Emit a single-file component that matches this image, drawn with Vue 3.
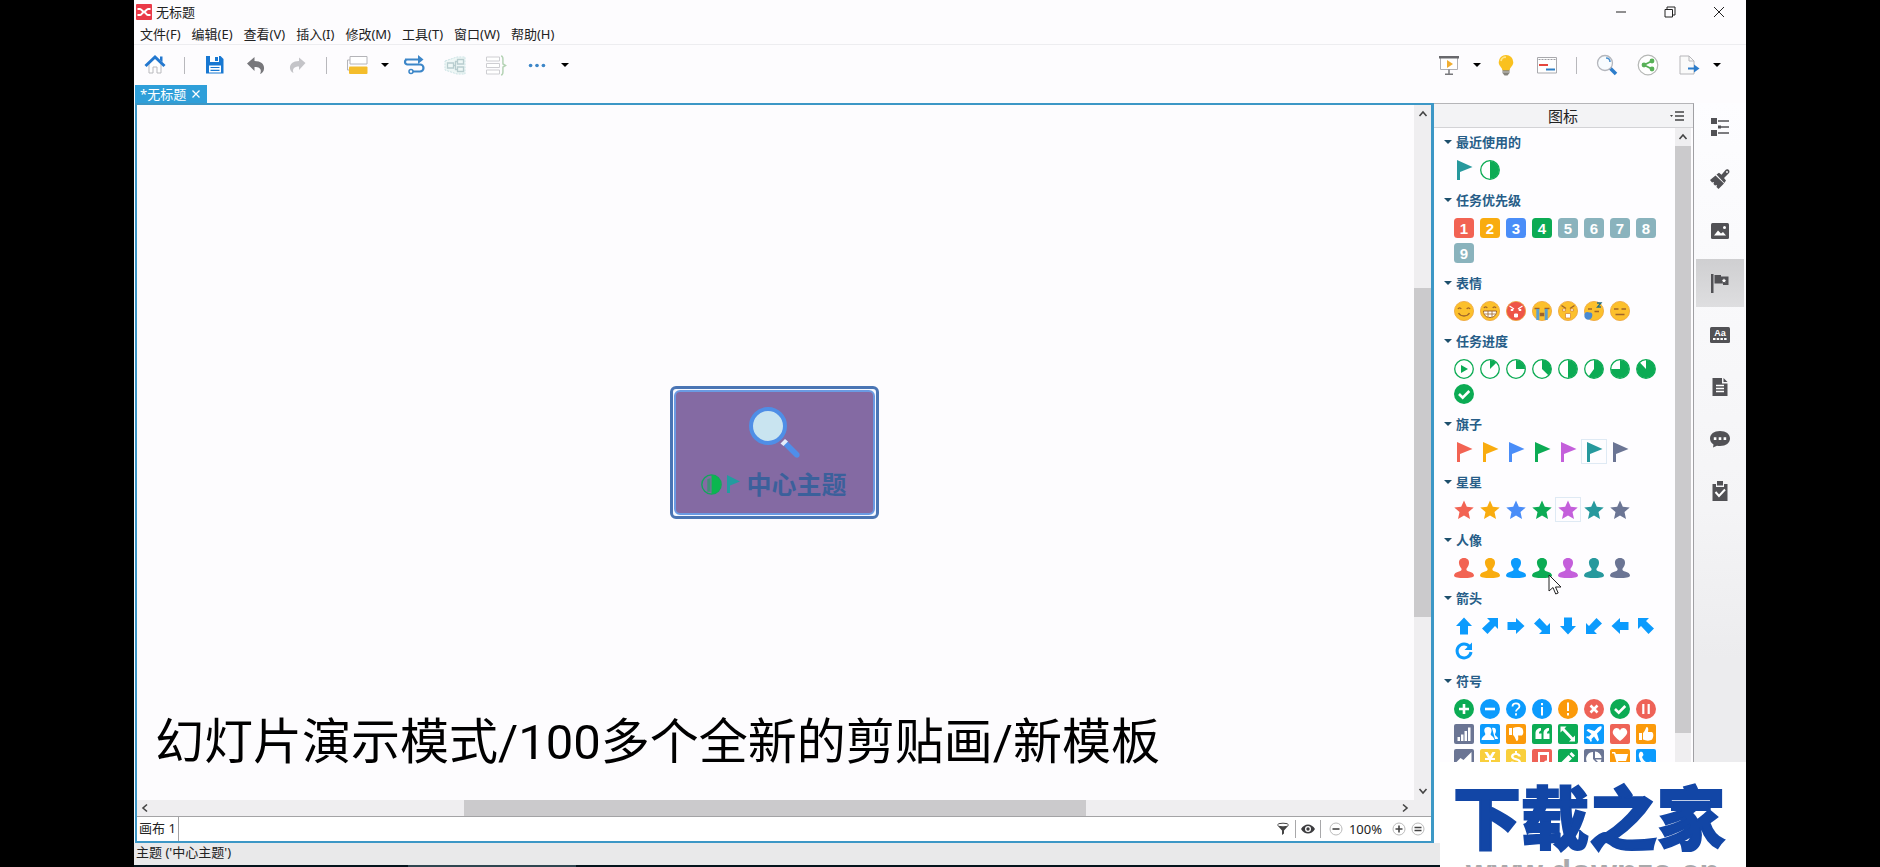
<script setup>
const menus = ['文件(F)', '编辑(E)', '查看(V)', '插入(I)', '修改(M)', '工具(T)', '窗口(W)', '帮助(H)']

const bar = {
  home: '<path d="M5 10v9h4v-6h4v6h4v-9l-6-6z" fill="#fff" stroke="#b9b9bd"/><path d="M1.500 12 11 3l9.500 9" fill="none" stroke="#2378cf" stroke-width="3"/><path d="M16 2.500h2.500V8L16 6z" fill="#2378cf"/>',
  save: '<path d="M2 2h14.500L19.500 5v14.500H2z" fill="#1878d2"/><path d="M6 2h9v6H6z" fill="#fff"/><path d="M11 3h3v4h-3z" fill="#1878d2"/><path d="M5 11.500h12v7H5z" fill="#fff"/><path d="M6.500 13.500h9M6.500 16.300h9" stroke="#1878d2" stroke-width="1.200"/>',
  undo: '<path d="M2 9.500 9.500 3v4c7 0 10 3.500 9.500 8-.3 2.500-1.500 4-4 5 2-4 .5-7-5.500-7v4z" fill="#77777b"/>',
  redo: '<path d="M19.500 9 13 3.500V7C7 7 3.500 10 4 14.500c.3 2 1.500 3.500 3.500 4.500-1.500-4 .5-6.500 5.500-6.500V16z" fill="#c4c4c8"/>',
  topic: '<path d="M4 2.500h17v7.500H4z" fill="#fff" stroke="#b4b4b8"/><path d="M4 6H1.500v10H4" fill="none" stroke="#b4b4b8"/><rect x="3" y="12.500" width="18.500" height="7.500" rx="1" fill="#f4bd2c"/>',
  relation: '<path d="M2 5.500h15M7 10.500H4.500a2.500 2.500 0 0 1 0-5M7 10.500h10a3.500 3.500 0 0 1 0 7H8" fill="none" stroke="#3c86c8" stroke-width="2.200"/><path d="m15 1 5.500 4.500L15 10z" fill="#3c86c8"/><circle cx="8" cy="17.500" r="2" fill="#fff" stroke="#3c86c8" stroke-width="1.500"/>',
  boundary: '<path d="M1 7 13 3h8v17h-8L1 16z" fill="#eef7f6" stroke="#cbe2e4" stroke-dasharray="2 1"/><path d="M3.500 9h6v5h-6zM13.500 5.500h6v4.500h-6zM13.500 13h6v4.500h-6zM9.500 11.500h2M13.500 7.500h-2v8h2" fill="none" stroke="#b8cdcf" stroke-width="1.300"/>',
  summary: '<path d="M1.500 3h13v4h-13zM1.500 9.500h13v4h-13zM1.500 16h13v4h-13z" fill="#fff" stroke="#ceced2"/><path d="M16 2c3 0 1.500 6 2 8l2.500 1.500L18 13c-.5 2 1 8-2 8" fill="none" stroke="#b5d3b5" stroke-width="1.500"/>',
  dots: '<circle cx="5" cy="11.500" r="2" fill="#3c86c8"/><circle cx="12" cy="11.500" r="2" fill="#3c86c8"/><circle cx="19" cy="11.500" r="2" fill="#3c86c8"/>',
  present: '<path d="M2.500 4v11.500h17V4" fill="#fff" stroke="#b0b0b4"/><path d="M1 2h20v2.500H1z" fill="#68686c"/><path d="M11 15.500V20M7 20.300h8" stroke="#77777b" stroke-width="1.500"/><path d="m9 6 6 4-6 4z" fill="#f0ad30"/>',
  bulb: '<path d="M7.500 15h7v4l-2 2.500h-3l-2-2.500z" fill="#85837c"/><path d="M11 1a7.200 7.200 0 0 0-7.300 7.200c0 3.300 3 4.800 3.800 8h7c.8-3.200 3.800-4.700 3.800-8A7.200 7.200 0 0 0 11 1z" fill="#fac11f"/><path d="M6 7c.5-3 3-4 5-3.700" fill="none" stroke="#ffe588" stroke-width="1.800"/><path d="M7.500 18h7" stroke="#c9c7c0"/>',
  gantt: '<path d="M1.500 3.500h19v15.500h-19z" fill="#fff" stroke="#a9a9ad"/><path d="M2.500 5.500h17" stroke="#9d9da3" stroke-dasharray="2 1"/><path d="M3 11h9" stroke="#e5473f" stroke-width="2"/><path d="M10 15.500h9" stroke="#2f7fc4" stroke-width="2"/>',
  search: '<path d="m14 14 6 6" stroke="#2d7dcb" stroke-width="3.500"/><circle cx="9" cy="9" r="7.500" fill="#f8fcff" stroke="#b4b6bc" stroke-width="1.300"/><path d="M10 4c2.500 0 4 1.700 4 4" fill="none" stroke="#4c91cf" stroke-width="1.600"/>',
  share: '<circle cx="11" cy="11" r="9.800" fill="#fff" stroke="#b5b7b5" stroke-width="1.200"/><path d="M15 7 7 11l8 4" fill="none" stroke="#58b158" stroke-width="1.800"/><circle cx="15" cy="7" r="2.400" fill="#58b158"/><circle cx="7" cy="11" r="2.400" fill="#58b158"/><circle cx="15" cy="15" r="2.400" fill="#58b158"/>',
  exp: '<path d="M2 2h9l5 5v13H2z" fill="#fafafa" stroke="#b6b6ba"/><path d="M11 2v5h5" fill="none" stroke="#b6b6ba"/><path d="M10 14.500h8" stroke="#2d7dcb" stroke-width="2"/><path d="m16 10.500 5.500 4-5.500 4z" fill="#2d7dcb"/>',
}

const leftTools = [
  ['home', '主页'], ['sep'], ['save', '保存'], ['undo', '撤销'], ['redo', '重做'], ['sep'],
  ['topic', '主题'], ['caret', '更多主题'], ['relation', '联系'], ['boundary', '外框'],
  ['summary', '概要'], ['dots', '更多'], ['caret', '更多选项'],
]
const rightTools = [
  ['present', '演示'], ['caret', '演示选项'], ['bulb', '头脑风暴'], ['gantt', '甘特图'], ['sep'],
  ['search', '搜索'], ['share', '分享'], ['exp', '导出'], ['caret', '导出选项'],
]

const views = [
  ['大纲', '<path d="M1 1h6v6H1zM1 13h6v6H1zM8 8.500h3v3H8z"/><path d="M8 4h11M11 10h8M8 16h11" stroke="#515155" stroke-width="1.600"/>'],
  ['格式', '<path d="M0 11 5.500 6.500l8.500 8-5.500 5.500-2-2 .5-2-2 .5-1.500-1.500.5-2-2 .5z"/><path d="m6.500 5.500 2.500-1.700 2.500 2L15.500 1c1-1.200 3-.8 3.700.5.500 1.200.2 2.300-.7 3L14 9l2 2.500-1.700 2.500z"/><circle cx="17" cy="3" r=".9" fill="#fff"/>'],
  ['图片', '<rect x="1" y="2" width="18" height="16" rx="1.500"/><path d="m4 14.500 4-5 3 3 2-1.500 3 3.500z" fill="#fff"/><circle cx="14.500" cy="6.500" r="1.500" fill="#fff"/>'],
  ['图标', '<path d="M1 1h2.500v19H1zM4.500 2H11v1.500h7.500V12H13v-1.500H4.500z"/><path d="m14 5.300.7 1.400 1.600.2-1.200 1.100.3 1.600-1.400-.8-1.400.8.3-1.600-1.200-1.100 1.600-.2z" fill="#fff"/>'],
  ['标签', '<rect x="0" y="2" width="20" height="16" rx="1.500"/><path d="M3 14h14" stroke="#fff" stroke-width="2.200" stroke-dasharray="2.500 1.200"/><text x="10" y="10.500" text-anchor="middle" font-size="9" font-weight="700" font-family="Liberation Sans" fill="#fff">Aa</text>'],
  ['备注', '<path d="M2.500 1h9.500v5.500h5.500V19h-15z"/><path d="m13.500 1 4 4h-4z"/><path d="M6 8.500h8M6 11.500h8M6 14.500h8" stroke="#fff" stroke-width="1.300"/>'],
  ['批注', '<path d="M10 2c6 0 10 3 10 7.500S16 17 10 17c-1 0-2-.1-3-.3L3 18.500l.5-3C1.300 14 0 12 0 9.500 0 5 4 2 10 2z"/><path d="M3.800 8.300h2.600v2.600H3.800zM8.700 8.300h2.600v2.600H8.700zM13.600 8.300h2.600v2.600h-2.600z" fill="#fff"/>'],
  ['任务信息', '<path d="M2.500 3H6v3h8V3h3.500v17h-15z"/><path d="M7 0h6v4.500H7z"/><path d="m5.500 11 3.500 4 6-6.500" stroke="#fff" stroke-width="2" fill="none"/>'],
]

const palette = ['#f26353', '#f9ac0f', '#4a8df8', '#0cab54', '#c45fdb', '#27999d', '#6b7594']
const green = '#0cab54'

const flag = (c) => `<path d="M3 0l15.500 7L6 12v8H3z" fill="${c}"/>`
const star = (c) => `<path d="m10 .500 2.800 6.300 6.900.700-5.200 4.600 1.500 6.900-6-3.500L4 19l1.500-6.900L.3 7.500l6.900-.7z" fill="${c}"/>`
const person = (c) => `<path d="M10 0c3.600 0 5.300 2.300 5 5.300-.2 2.400-1.500 4-2.300 5-.8 1.700 0 2.700 2.300 3.200 3 .7 5 2 5 4.200C20 19.500 15 20 10 20S0 19.500 0 17.700c0-2.200 2-3.500 5-4.200 2.300-.5 3.100-1.500 2.300-3.200-.8-1-2.100-2.600-2.300-5C4.700 2.300 6.400 0 10 0z" fill="${c}"/>`
const digit = (n) => `<rect width="20" height="20" rx="3.500" fill="${['#f26353', '#f9ac0f', '#4a8df8', '#0cab54'][n - 1] || '#8ab3bd'}"/><text x="10" y="15.500" text-anchor="middle" font-size="15" font-weight="700" font-family="Liberation Sans" fill="#fff">${n}</text>`
const pie = (f) => {
  const a = f * 2 * Math.PI
  const x = 10 + 9 * Math.sin(a)
  const y = 10 - 9 * Math.cos(a)
  return `<circle cx="10" cy="10" r="9.300" fill="#fff" stroke="${green}" stroke-width="1.300"/><path d="M10 10V1A9 9 0 ${f > 0.5 ? 1 : 0} 1 ${x} ${y}z" fill="${green}"/>`
}
const arrow = (deg) => deg % 90
  ? `<path transform="rotate(${deg - 45} 10 10)" d="M18 2v11l-3-3-7.500 8L2 12.500 10 5 7 2z" fill="#0c9bfd"/>`
  : `<path transform="rotate(${deg} 10 10)" d="m10 1.500 8 8.500h-4v8.500H6V10H2z" fill="#0c9bfd"/>`
const face = (inner, c = '#fcc02c') => `<circle cx="10" cy="10" r="9.600" fill="${c}" stroke="#eda43a" stroke-width=".8"/><g fill="none" stroke="#a0652a" stroke-width="1.400">${inner}</g>`
const disc = (c, inner) => `<circle cx="10" cy="10" r="10" fill="${c}"/><g fill="none" stroke="#fff" stroke-width="2.600">${inner}</g>`
const tile = (c, inner) => `<rect width="20" height="20" rx="2" fill="${c}"/><g fill="#fff">${inner}</g>`
const check = '<path d="m5 10 3.700 3.700L15.300 7"/>'
const blue = '#0c9bfd'
const red = '#ee6257'
const orange = '#fb9a0b'
const slate = '#6b7594'
const yellow = '#f9cf3c'

const sections = [
  { name: '最近使用的', icons: [flag('#27999d'), pie(0.5)] },
  { name: '任务优先级', icons: [1, 2, 3, 4, 5, 6, 7, 8, 9].map(digit) },
  {
    name: '表情',
    icons: [
      face('<path d="M4 8c.7-1.500 2.500-1.500 3.200 0M12.800 8c.7-1.500 2.500-1.500 3.200 0M4.500 12c2.500 4 8.500 4 11 0"/>'),
      face('<path d="M4 7c.7-1.500 2.500-1.500 3.200 0M12.800 7c.7-1.500 2.500-1.500 3.200 0"/><path d="M3.500 10h13c0 4-2.500 6.500-6.500 6.500S3.500 14 3.500 10z" fill="#fff" stroke-width="1"/><path d="M4.500 13h11M8 10v6M12 10v6" stroke-width=".8"/>'),
      face('<path d="m3.500 5 4.500 3M16.500 5 12 8" stroke="#fff" stroke-width="1.200"/><path d="M5 8.500h2v1H5zM13 8.500h2v1h-2zM8.500 13h3v3h-3z" stroke="#fff" stroke-width="1" fill="#fff"/>', '#ee5547'),
      face('<path d="M2.500 7.500h5M12.500 7.500h5"/><path d="M5.800 8v11M14.200 8v11" stroke="#5b9fd0" stroke-width="3"/><path d="M8.500 12.500h3v2h-3z" fill="#a0652a"/>'),
      face('<path d="m3.500 4.500 4.500 3M16.500 4.500l-4.500 3"/><path d="M4.500 8h3v2h-3zM12.500 8h3v2h-3zM7.500 12.500h5v4.500h-5z" fill="#fff" stroke="#d98a35" stroke-width=".8"/>'),
      face('<path d="M4 8h4M10.500 10.500H15"/><path d="M1 12c2-2 4 0 5-.5 2 0 3 2 2 4.500-1 2.500-4 3.500-6 2-2-1.500-2-4-1-6z" fill="#4a8ad2" stroke="none"/><path d="M13 2h4L13.500 6H17" stroke="#246b7d" stroke-width="1.300"/>'),
      face('<path d="M4 8h4.500M11.500 8H16M5.500 13.500h9"/>'),
    ],
  },
  {
    name: '任务进度',
    icons: [
      `<circle cx="10" cy="10" r="9.300" fill="#fff" stroke="${green}" stroke-width="1.300"/><path d="m7 6 7 4-7 4z" fill="${green}"/>`,
      pie(0.125), pie(0.25), pie(0.375), pie(0.5), pie(0.6), pie(0.75), pie(0.88),
      disc(green, check),
    ],
  },
  { name: '旗子', icons: palette.map(flag), active: 5 },
  { name: '星星', icons: palette.map(star), active: 4 },
  { name: '人像', icons: palette.map((c, i) => person(i === 2 ? blue : c)), pointer: 3 },
  {
    name: '箭头',
    icons: [
      ...[0, 45, 90, 135, 180, 225, 270, 315].map(arrow),
      `<path d="M15.500 5.500A7 7 0 1 0 17 11" fill="none" stroke="${blue}" stroke-width="3"/><path d="M18 1.500V9h-7.500z" fill="${blue}"/>`,
    ],
  },
  {
    name: '符号',
    icons: [
      disc(green, '<path d="M10 5v10M5 10h10"/>'),
      disc(blue, '<path d="M5 10h10"/>'),
      disc(blue, '<path d="M6.500 7.500c0-4.500 7-4 7-.2 0 2.500-3.500 2.700-3.500 5.200M10 14.200v2.300" stroke-width="1.800"/>'),
      disc(blue, '<path d="M10 4v2.200M10 8v8.500" stroke-width="2"/>'),
      disc(orange, '<path d="M10 3.500V12M10 14v2.500" stroke-width="2"/>'),
      disc(red, '<path d="m6.500 6.500 7 7M13.500 6.500l-7 7"/>'),
      disc(green, check),
      disc(red, '<path d="M7.300 5v10M12.700 5v10" stroke-width="2.200"/>'),
      tile(slate, '<path d="M3.500 13h2.500v4H3.500zM7 10.500h2.500V17H7zM10.500 7H13v10h-2.500zM14 3.500h2.500V17H14z"/>'),
      tile(blue, '<path d="M12 4c4-1.500 5 3 3 6-.5 2 3 2 3 5h-3zM8 3c3.500 0 4.300 3 3 6-1.800 3 3 2.500 3.500 7h-13C2 11.500 6.500 12 5 9 3.500 6 4.500 3 8 3z"/>'),
      tile(orange, '<path d="M3 4h3v7H3zM7 4c3-1.500 7-1.500 9 0 1.500 2 2 6 0 7.500h-4c.5 3 .5 5.500-1.500 5.500-1.500-3-2-5-3.500-6z"/>'),
      tile(green, '<path d="M9 4v2.500c-1.500.5-2 1.500-2 3h2.500V15h-6V9C3.500 6 6 4 9 4zM17 4v2.500c-1.500.5-2 1.500-2 3h2.500V15h-6V9c0-3 2.500-5 5.500-5z"/>'),
      tile(green, '<path d="M2.500 2.500h6l-2 2 8.500 9 2-2v6h-6l2-2-8.500-9-2 2z"/>'),
      tile(blue, '<path d="M17.500 2.500c-1.500-.7-3 .5-4.500 2L10.500 7 4 5 2.500 6.500l5 3.500L5 12.500l-2-.3-1 1 3 1.800 1.800 3 1-1-.3-2 2.500-2.500 3.500 5L15 16l-2-6.500L15.500 7c1.500-1.500 2.700-3 2-4.500z"/>'),
      tile(red, '<path d="M10 17C2 11 2.500 8.500 3 7c1-3.500 5.500-4 7-.5 1.500-3.500 6-3 7 .5.500 1.500 1 4-7 10z"/>'),
      tile(orange, '<path d="M3 9h3v7H3zM7 9c1.500-1 2-3 3.500-6 2 0 2 2.500 1.500 5h4c2 1.500 1.500 5.500 0 7.500-2 1.500-6 1.500-9 0z"/>'),
      tile(slate, '<path d="m2.500 13 4-4 3 2 5-5 3-3v14h-15z"/>'),
      tile(yellow, '<path d="M4.500 3h3l2.500 4 2.500-4h3L12 9h3v2h-4v2h4v2h-4v2H9v-2H5v-2h4v-2H5V9h3z"/>'),
      tile(yellow, '<path d="M9 2h2v2c2 .3 3.500 1.500 4 3.500h-2.500C12 5.500 7.500 5.500 7.500 7.500S15 9 15 13c0 2-1.500 3-4 3.500V18H9v-1.500c-2.500-.5-4-2-4-4h2.500c0 3 5 2.500 5 .5C12.500 11 5 11.500 5 7.500 5 5.500 6.500 4.300 9 4z"/>'),
      tile(red, '<path d="M6 3h11v10.500a2.500 2 0 1 1-2-2V6H8v9.500a2.500 2 0 1 1-2-2z"/>'),
      tile(green, '<path d="m13.500 3 3.500 3.500-2 2L11.500 5zM10.500 6 14 9.500 6.500 17H3v-3.500z"/>'),
      tile(slate, '<path d="M9 3v7l5 5A7 7 0 1 1 9 3zM11 2.500a7 7 0 0 1 6.500 6.500H11zM11.500 10.500h6a7 7 0 0 1-2 4z"/>'),
      tile(orange, '<path d="M2 3h3l1 2h12l-2 7H8l.5 1.500H16V15H7L4 4.500H2zM7 16h2.500v2H7zM13 16h2.500v2H13z"/>'),
      tile(blue, '<path d="M4 3c2-1 3 0 3.500 3L6 8c1 3 3 5 6 6l2-1.500c3 .5 4 1.500 3 3.500-1 1.500-3 2-5 1.500C7 16 4 13 3 8c-.5-2 0-4 1-5z"/>'),
    ],
  },
]
</script>

<template>
  <div class="stage">
    <div class="app">
      <header class="titlebar">
        <svg class="logo" viewBox="0 0 16 16"><rect width="16" height="16" rx="1" fill="#ea3a48" /><path d="M1.500 5H4c1.500 0 2 2.700 4 2.700S10.500 5 12 5h2.500M1.500 11H4c1.500 0 2-2.700 4-2.700s2.500 2.700 4 2.700h2.500" fill="none" stroke="#fff" stroke-width="2" /></svg>
        <span class="title">无标题</span>
        <button class="win" aria-label="最小化"><svg viewBox="0 0 12 12"><path d="M1 6h10" /></svg></button>
        <button class="win" aria-label="还原"><svg viewBox="0 0 12 12"><path d="M1 3.500h7.500V11H1zM3 3.500V1h8v8H8.500" /></svg></button>
        <button class="win" aria-label="关闭"><svg viewBox="0 0 12 12"><path d="m1 1 10 10M11 1 1 11" /></svg></button>
      </header>

      <nav class="menubar">
        <button v-for="m in menus" :key="m">{{ m }}</button>
      </nav>

      <div class="toolbar">
        <div v-for="(group, g) in [leftTools, rightTools]" :key="g" class="tools">
          <template v-for="([id, label], i) in group" :key="i">
            <i v-if="id === 'sep'" class="sep"></i>
            <button v-else-if="id === 'caret'" class="caret" :aria-label="label"><i class="tri"></i></button>
            <button v-else class="tool" :aria-label="label"><svg :viewBox="id === 'dots' ? '0 0 24 22' : '0 0 22 22'" v-html="bar[id]"></svg></button>
          </template>
        </div>
      </div>

      <div class="tabs">
        <div class="tab">
          <span>*无标题</span>
          <button aria-label="关闭标签"><svg viewBox="0 0 8 8"><path d="m.500.500 7 7M7.500.500l-7 7" /></svg></button>
        </div>
      </div>

      <main class="work">
        <section class="editor">
          <div class="canvas-row">
            <div class="canvas">
              <div class="node">
                <div class="node-body">
                  <svg class="lens" viewBox="0 0 52 54"><path d="m34 38 4-4 13 13c2 3-1 6-4 4z" fill="#4f8ee9" /><path d="m32.500 37.500 4.500-4.500 3 2.500-4.500 4.500z" fill="#e4ecfa" /><circle cx="20" cy="20" r="17" fill="#c9e4f0" stroke="#4f8ee6" stroke-width="4" /></svg>
                  <div class="node-line">
                    <svg class="mark" viewBox="0 0 20 20"><circle cx="10" cy="10" r="9.200" fill="none" stroke="#12a75c" stroke-width="1.300" /><path d="M10 1a9 9 0 0 1 0 18z" fill="#0bb64f" /><path d="M9 4v13H6V5z" fill="#12a75c" opacity=".6" /></svg>
                    <svg class="mark small" viewBox="0 0 14 20"><path d="M1 1l13 6.500L4 11.500V19H1z" fill="#239c9f" /></svg>
                    <span>中心主题</span>
                  </div>
                </div>
              </div>
              <p class="caption">幻灯片演示模式/100多个全新的剪贴画/新模板</p>
            </div>
            <div class="vbar">
              <button aria-label="向上"><svg viewBox="0 0 10 10"><path d="m1.500 7 3.500-4 3.500 4" /></svg></button>
              <i class="fill"></i><i class="thumb"></i><i class="fill"></i>
              <button aria-label="向下"><svg viewBox="0 0 10 10"><path d="m1.500 3 3.500 4 3.500-4" /></svg></button>
            </div>
          </div>
          <div class="hbar">
            <button aria-label="向左"><svg viewBox="0 0 10 10"><path d="m7 1.500-4 3.500 4 3.500" /></svg></button>
            <i class="fill"></i><i class="thumb"></i><i class="fill"></i>
            <button aria-label="向右"><svg viewBox="0 0 10 10"><path d="m3 1.500 4 3.500-4 3.500" /></svg></button>
          </div>
          <div class="sheets">
            <button class="sheet">画布 1</button>
            <div class="view-tools">
              <button aria-label="筛选"><svg viewBox="0 0 14 14"><ellipse cx="7" cy="3" rx="5.500" ry="1.800" fill="#fff" stroke="#444" /><path d="M1.500 3.500 6 8.500V13l2-1.500v-3l4.500-5C11 5.500 3 5.500 1.500 3.500z" fill="#444" /></svg></button>
              <i class="sep"></i>
              <button aria-label="显示"><svg viewBox="0 0 14 14"><path d="M0 7c3.500-6 10.500-6 14 0-3.500 6-10.500 6-14 0z" fill="#3c3c3f" /><circle cx="7" cy="7" r="3" fill="#fff" /><circle cx="7" cy="7" r="1.700" fill="#3c3c3f" /></svg></button>
              <i class="sep"></i>
            </div>
            <div class="zoom">
              <button aria-label="缩小"><svg viewBox="0 0 14 14"><circle cx="7" cy="7" r="6" fill="#fff" stroke="#bbb" /><path d="M3.500 7h7" stroke="#444" stroke-width="1.600" /></svg></button>
              <output>100%</output>
              <button aria-label="放大"><svg viewBox="0 0 14 14"><circle cx="7" cy="7" r="6" fill="#fff" stroke="#bbb" /><path d="M3.500 7h7M7 3.500v7" stroke="#444" stroke-width="1.600" /></svg></button>
              <button aria-label="适应画布"><svg viewBox="0 0 14 14"><circle cx="7" cy="7" r="6" fill="#fff" stroke="#bbb" /><path d="M3.500 5.500h7M3.500 8.500h7" stroke="#444" stroke-width="1.600" /></svg></button>
            </div>
          </div>
        </section>

        <aside class="panel">
          <header class="panel-head">
            <h2>图标</h2>
            <button aria-label="面板菜单"><svg viewBox="0 0 14 12"><path d="M0 5h3L1.500 7z" fill="#444" /><path d="M5 2h9M5 6h9M5 10h9" stroke="#444" stroke-width="1.500" /></svg></button>
          </header>
          <div class="panel-body">
            <div class="groups">
              <section v-for="s in sections" :key="s.name" class="group">
                <button class="group-head"><i class="tri"></i>{{ s.name }}</button>
                <div class="icons">
                  <button v-for="(icon, i) in s.icons" :key="i" class="cell" :class="{ active: s.active === i }" :aria-label="s.name + (i + 1)">
                    <svg viewBox="0 0 20 20" v-html="icon"></svg>
                    <svg v-if="s.pointer === i" class="pointer" viewBox="0 0 14 22"><path d="M1 1v16l4-3.500 2.700 6.500 2.500-1-2.700-6H13z" fill="#fff" stroke="#222" /></svg>
                  </button>
                </div>
              </section>
            </div>
            <div class="vbar side">
              <button aria-label="面板向上"><svg viewBox="0 0 10 10"><path d="m1.500 7 3.500-4 3.500 4" /></svg></button>
              <i class="thumb"></i><i class="fill"></i>
            </div>
          </div>
        </aside>

        <nav class="views">
          <button v-for="([label, art], i) in views" :key="label" :class="{ on: i === 3 }" :aria-label="label">
            <svg viewBox="0 0 20 20" fill="#515155" v-html="art"></svg>
          </button>
        </nav>
      </main>

      <footer class="status">主题 ('中心主题')</footer>
      <div class="taskbar"><i></i></div>

      <div class="watermark">
        <strong>下载之家</strong>
        <span>www.downza.cn</span>
      </div>
    </div>
  </div>
</template>

<style>
body {
  background: #000;
}
</style>

<style scoped>
* {
  box-sizing: border-box;
}
.stage {
  height: 100vh;
  padding: 0 134px;
  background: #000;
  color: #222;
  font-family: "Noto Sans", "Noto Sans CJK SC", sans-serif;
  font-size: 13px;
  line-height: 18px;
}
button {
  display: flex;
  align-items: center;
  justify-content: center;
  margin: 0;
  padding: 0;
  border: 0;
  background: none;
  color: inherit;
  font: inherit;
}
svg {
  display: block;
}
.app {
  position: relative;
  display: flex;
  flex-direction: column;
  height: 100%;
  overflow: hidden;
  background: #fdfcfe;
}
.titlebar {
  display: flex;
  align-items: center;
  height: 24px;
  padding: 0 3px 0 2px;
}
.logo {
  width: 16px;
  height: 16px;
}
.title {
  flex: 1;
  padding-left: 4px;
}
.win {
  width: 49px;
  height: 24px;
}
.win svg {
  width: 12px;
  height: 12px;
  fill: none;
  stroke: #222;
}
.menubar {
  display: flex;
  align-items: center;
  gap: 11px;
  height: 21px;
  padding-left: 6px;
  border-bottom: 1px solid #ededf0;
}
.toolbar {
  display: flex;
  justify-content: space-between;
  height: 40px;
  padding-right: 21px;
}
.tools {
  display: flex;
  align-items: center;
}
.tool {
  width: 41px;
  height: 32px;
}
.tool svg {
  width: 22px;
  height: 22px;
}
.caret {
  width: 16px;
  height: 32px;
}
.tri {
  border: 4px solid transparent;
  border-top-color: #000;
  border-bottom: 0;
}
.tools .sep {
  width: 1px;
  height: 17px;
  margin: 0 9px;
  background: #b8b8bc;
}
.tabs {
  display: flex;
  height: 18px;
  padding-left: 1px;
}
.tab {
  display: flex;
  align-items: center;
  gap: 6px;
  padding: 0 7px 0 5px;
  background: #2f9fd9;
  color: #fff;
}
.tab svg {
  width: 8px;
  height: 8px;
  stroke: #fff;
  stroke-width: 1.300;
}
.work {
  display: grid;
  flex: 1;
  grid-template-columns: 1fr 260px 52px;
  min-height: 0;
  padding-left: 1px;
}
.editor {
  display: flex;
  flex-direction: column;
  min-width: 0;
  border: 2px solid #3c97c6;
  border-right-width: 3px;
}
.canvas-row {
  display: flex;
  flex: 1;
  min-height: 0;
}
.canvas {
  position: relative;
  display: flex;
  flex: 1;
  align-items: center;
  justify-content: center;
  padding-right: 2px;
}
.node {
  padding: 1px;
  border: 3px solid #4a75b4;
  border-radius: 6px;
  background: #f4f8ff;
}
.node-body {
  display: flex;
  flex-direction: column;
  align-items: center;
  gap: 8px;
  padding: 14px 26px 13px 25px;
  border: 2px solid #6b9ae2;
  border-radius: 6px;
  background: #846aa3;
}
.lens {
  width: 52px;
  height: 54px;
}
.node-line {
  display: flex;
  align-items: center;
  color: #3b609b;
  font-size: 25px;
  font-weight: 700;
  line-height: 32px;
}
.mark {
  width: 21px;
  height: 21px;
  margin-right: 4px;
}
.mark.small {
  width: 14px;
  height: 20px;
  margin-right: 6px;
}
.caption {
  position: absolute;
  bottom: 22px;
  left: 18px;
  margin: 0;
  color: #000;
  font-family: Roboto, "Noto Sans CJK SC", sans-serif;
  font-size: 49px;
  line-height: 70px;
  white-space: nowrap;
}
.vbar {
  display: flex;
  flex-direction: column;
  width: 17px;
  background: #efeef0;
}
.vbar button {
  height: 18px;
}
.vbar svg,
.hbar svg {
  width: 10px;
  height: 10px;
  fill: none;
  stroke: #444;
  stroke-width: 1.600;
}
.vbar .fill {
  flex: 1;
}
.vbar .thumb {
  flex: 2;
  background: #cbcacc;
}
.hbar {
  display: flex;
  height: 17px;
  padding-right: 18px;
  border-bottom: 1px solid #a3a3a5;
  background: #efeef0;
}
.hbar button {
  width: 16px;
}
.hbar .fill {
  flex: 1;
}
.hbar .thumb {
  flex: 2;
  background: #cbcacc;
}
.sheets {
  display: flex;
  align-items: center;
  height: 24px;
  padding-right: 6px;
  background: #fff;
}
.sheet {
  height: 24px;
  margin-right: auto;
  padding: 0 2px 2px;
  border-right: 1px solid #a3a3a5;
}
.view-tools,
.zoom {
  display: flex;
  align-items: center;
  gap: 5px;
}
.view-tools {
  margin-right: 8px;
}
.view-tools .sep {
  width: 1px;
  height: 18px;
  background: #a8a8aa;
}
.sheets svg {
  width: 14px;
  height: 14px;
}
.zoom output {
  padding: 0 5px 0 1px;
}
.panel {
  display: flex;
  flex-direction: column;
  min-height: 0;
  border-top: 1px solid #b5b5b8;
  border-right: 1px solid #a0a0a4;
  background: #fefdff;
}
.panel-head {
  display: flex;
  align-items: center;
  height: 24px;
  padding: 0 9px 0 22px;
  border-bottom: 1px solid #d3d3d6;
  background: #f3f3f5;
}
.panel-head h2 {
  flex: 1;
  margin: 0;
  font-size: 15px;
  font-weight: 400;
  line-height: 22px;
  text-align: center;
}
.panel-head svg {
  width: 14px;
  height: 12px;
}
.panel-body {
  display: flex;
  flex: 1;
  min-height: 0;
  padding-right: 2px;
}
.groups {
  flex: 1;
  padding-top: 1px;
  overflow: hidden;
}
.group-head {
  gap: 4px;
  height: 25px;
  padding-left: 10px;
  color: #275d88;
  font-weight: 700;
}
.icons {
  display: grid;
  grid-template-columns: repeat(auto-fill, 26px);
  padding: 3px 0 5px 17px;
}
.cell {
  position: relative;
  height: 25px;
}
.cell.active {
  outline: 1px solid #dfeaf4;
  outline-offset: -1px;
}
.cell svg {
  width: 20px;
  height: 20px;
}
.group-head .tri {
  border-top-color: #1d4f6c;
}
.cell .pointer {
  position: absolute;
  z-index: 1;
  top: 19px;
  left: 19px;
  width: 14px;
  height: 22px;
}
.side {
  width: 16px;
}
.side .thumb {
  flex: 16;
}
.side .fill {
  flex: 3;
}
.views {
  display: flex;
  flex-direction: column;
  gap: 4px;
  padding: 0 2px;
  background: linear-gradient(#fdfdff, #f4f4f6 55%, #ececee 75%);
}
.views button {
  height: 48px;
}
.views .on {
  background: linear-gradient(#cfcfd1, #dedee0);
}
.views svg {
  width: 20px;
  height: 20px;
}
.status {
  height: 22px;
  padding: 0 2px;
  background: #e9e9ea;
}
.taskbar {
  height: 2px;
  padding-left: 17%;
  background: #04141c;
}
.taskbar i {
  display: block;
  width: 168px;
  height: 2px;
  background: #2f4650;
}
.watermark {
  position: absolute;
  right: 0;
  bottom: 0;
  width: 306px;
  height: 105px;
  padding: 14px 0 0 13px;
  overflow: hidden;
  background: #fff;
  white-space: nowrap;
}
.watermark strong {
  display: block;
  color: #1246a6;
  font-family: "Noto Sans CJK SC", sans-serif;
  font-size: 68px;
  font-weight: 900;
  line-height: 78px;
  -webkit-text-stroke: 2px #1246a6;
}
.watermark span {
  display: block;
  padding-left: 13px;
  color: #a9a9ab;
  font-family: "Liberation Sans", sans-serif;
  font-size: 33px;
  font-weight: 700;
  line-height: 36px;
}
</style>
